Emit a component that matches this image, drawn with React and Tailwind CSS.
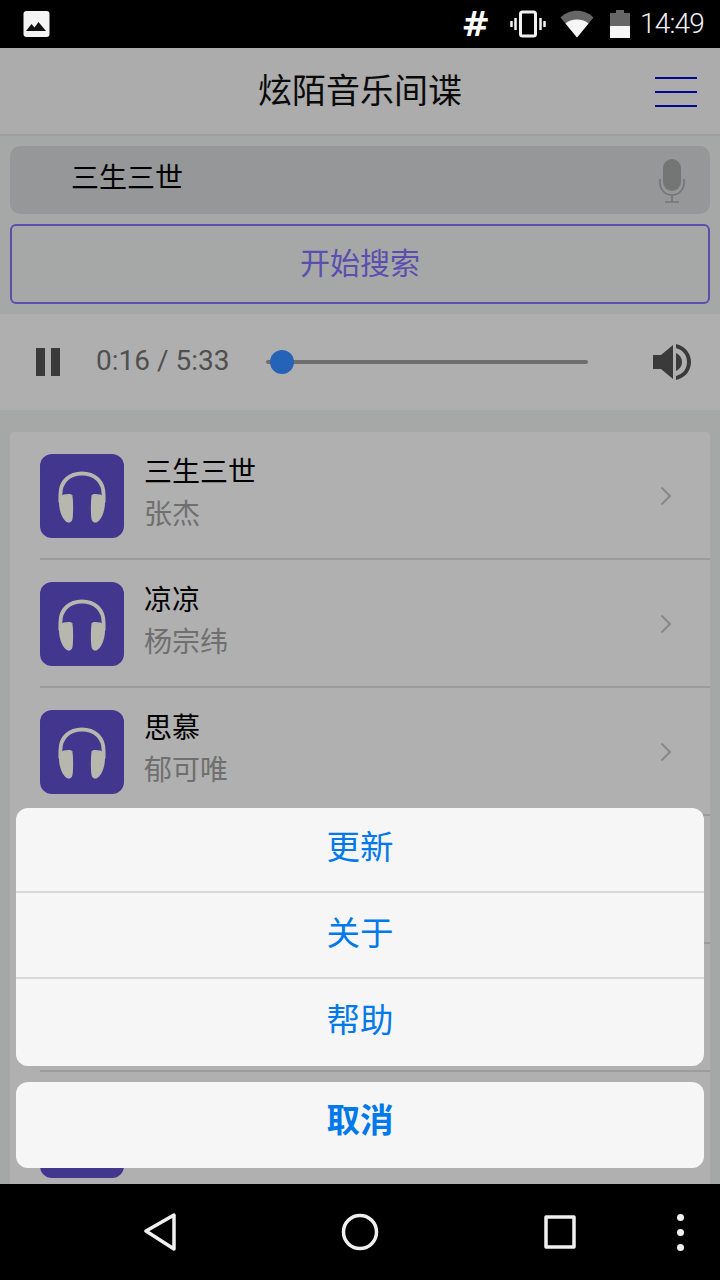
import React from 'react';

const cjk = "font-['Roboto','Noto_Sans_CJK_SC',sans-serif]";

const songs = [
  { title: '三生三世', artist: '张杰' },
  { title: '凉凉', artist: '杨宗纬' },
  { title: '思慕', artist: '郁可唯' },
  { title: '', artist: '' },
  { title: '', artist: '' },
  { title: '', artist: '' },
];

const StatusBar = () => (
  <div className="h-12 shrink-0 bg-black flex items-center pl-[23px] pr-4 text-[#f2f2f2]">
    <svg width="28" height="26" viewBox="0 0 28 26">
      <rect x="0.5" y="0" width="26" height="26" rx="3" fill="#f4f4f4" />
      <path d="M3 20 L8.5 13 L11.5 16.5 L15.5 11 L23 20 Z" fill="#111" />
    </svg>
    <div className="flex-1" />
    <span className="font-['DejaVu_Sans',sans-serif] font-bold text-[34px] leading-none text-white mr-[20px]">#</span>
    <svg className="mr-[14px]" width="36" height="28" viewBox="0 0 36 28" fill="none" stroke="#f2f2f2">
      <rect x="10.5" y="2" width="15" height="24" rx="2" strokeWidth="3" />
      <path d="M5.5 8v12M1.5 11v6M30.5 8v12M34.5 11v6" strokeWidth="2.5" />
    </svg>
    <svg className="mr-[16px]" width="34" height="28" viewBox="0 0 34 28">
      <path d="M0.5 7.5 C9 -1.5 25 -1.5 33.5 7.5 L17 27.5 Z" fill="#666" />
      <path d="M5.5 13.5 C11 8 23 8 28.5 13.5 L17 27.5 Z" fill="#f6f6f6" />
    </svg>
    <svg className="mr-[10px]" width="20" height="28" viewBox="0 0 20 28">
      <path d="M6 0h8v3h6v25H0V3h6z" fill="#666" />
      <rect x="0" y="16" width="20" height="12" fill="#f6f6f6" />
    </svg>
    <span className="font-['Roboto',sans-serif] font-light text-[28px] leading-none tracking-[-0.8px]">14:49</span>
  </div>
);

const Header = () => (
  <div className="h-[88px] shrink-0 bg-[#acacac] border-b-2 border-[#9ea0a0] flex items-center justify-center relative">
    <h1 className={`${cjk} text-[34px] font-normal leading-none text-[#0a0a0a]`}>炫陌音乐间谍</h1>
    <div className="absolute right-[23px] top-[29px] w-[42px] flex flex-col gap-[12px]">
      <div className="h-[2px] bg-[#000a90]" />
      <div className="h-[2px] bg-[#000a90]" />
      <div className="h-[2px] bg-[#000a90]" />
    </div>
  </div>
);

const SearchBox = () => (
  <div className="h-[68px] rounded-[10px] bg-[#959798] flex items-center pl-[61px] pr-[25px]">
    <span className={`${cjk} text-[28px] leading-none text-black flex-1 mb-[2px]`}>三生三世</span>
    <svg width="26" height="44" viewBox="0 0 26 44" fill="none" className="mt-[2px]">
      <rect x="4" y="0" width="18" height="32" rx="9" fill="#747676" />
      <path d="M1 20v4a12 12 0 0 0 24 0v-4M13 36v7M6 43h14" stroke="#747676" strokeWidth="1.6" />
    </svg>
  </div>
);

const Player = () => (
  <div className="h-24 shrink-0 mt-[10px] bg-[#afafaf] flex items-center pl-9 pr-[29px]">
    <div className="flex gap-[6px] mr-[36px]">
      <div className="w-[9px] h-[28px] bg-[#3a3a3a]" />
      <div className="w-[9px] h-[28px] bg-[#3a3a3a]" />
    </div>
    <span className="font-['Roboto',sans-serif] text-[28px] leading-none text-[#505050] w-[170px] mb-[2px]">0:16 / 5:33</span>
    <div className="w-[322px] h-[4px] bg-[#6e6e6e] rounded-full relative">
      <div className="absolute left-[4px] top-[-10px] w-[24px] h-[24px] rounded-full bg-[#2563b8]" />
    </div>
    <div className="flex-1" />
    <svg width="38" height="36" viewBox="0 0 38 36" fill="#3a3a3a">
      <path d="M0 11h8L20 1v34L8 25H0z" />
      <path d="M23 9c4 2 6 5 6 9s-2 7-6 9z" />
      <path d="M23 0c9 2 15 9 15 18s-6 16-15 18v-4c7-2 11-7 11-14S30 6 23 4z" />
    </svg>
  </div>
);

const Headphones = () => (
  <svg className="mt-[2px]" width="48" height="53" viewBox="0 0 50 54">
    <path d="M2.500 32V24C2.500 10 12 2 25 2S47.500 10 47.500 24v8" fill="none" stroke="#b7b7ae" strokeWidth="4" />
    <path d="M1 32c0-4 2-7 5-8 4-1 8-1 9 1 1 6 1 20 0 25-1 3-3 3.500-5 3-5-2-9-12-9-21z" fill="#b7b7ae" />
    <path d="M49 32c0-4-2-7-5-8-4-1-8-1-9 1-1 6-1 20 0 25 1 3 3 3.500 5 3 5-2 9-12 9-21z" fill="#b7b7ae" />
  </svg>
);

const SongRow = ({ title, artist }) => (
  <div className="h-32 shrink-0 flex flex-col pl-[30px]">
    <div className="h-[126px] pt-[2px] flex items-center">
      <div className="w-[84px] h-[84px] rounded-[12px] bg-[#42368f] flex items-center justify-center mr-[20px]">
        <Headphones />
      </div>
      <div className={`${cjk} flex-1 text-[28px] leading-[42px] mb-[5px]`}>
        <div className="text-black">{title}</div>
        <div className="text-[#6f6f6f]">{artist}</div>
      </div>
      {title && (
        <svg className="mr-[38px]" width="12" height="20" viewBox="0 0 12 20" fill="none" stroke="#868686" strokeWidth="2">
          <path d="M1.500 1.500 10 10l-8.500 8.500" />
        </svg>
      )}
    </div>
    <div className="h-[2px] bg-[#9c9c9c]" />
  </div>
);

const ActionSheet = () => (
  <div className={`${cjk} absolute left-4 right-4 top-[760px] flex flex-col gap-4 text-[33.5px] leading-none text-[#0279ea]`}>
    <div className="rounded-[12px] bg-[#f6f6f6] flex flex-col">
      <div className="h-[85px] pb-[4px] flex items-center justify-center border-b-2 border-[#d8d8d8]">更新</div>
      <div className="h-[86px] pb-[2px] flex items-center justify-center border-b-2 border-[#d8d8d8]">关于</div>
      <div className="h-[87px] pb-[4px] flex items-center justify-center">帮助</div>
    </div>
    <div className="h-[86px] pb-[8px] rounded-[12px] bg-[#f6f6f6] flex items-center justify-center font-bold">取消</div>
  </div>
);

const NavBar = () => (
  <div className="h-24 shrink-0 bg-black flex items-center relative">
    <svg className="ml-[143px]" width="34" height="38" viewBox="0 0 34 38" fill="none" stroke="#f0f0f0" strokeWidth="3.5" strokeLinejoin="round">
      <path d="M31 2v34L3 18z" />
    </svg>
    <svg className="ml-[164px]" width="38" height="38" viewBox="0 0 38 38" fill="none" stroke="#f0f0f0" strokeWidth="3.5">
      <circle cx="19" cy="19" r="16.500" />
    </svg>
    <svg className="ml-[165px]" width="32" height="34" viewBox="0 0 32 34" fill="none" stroke="#f0f0f0" strokeWidth="3.500" strokeLinejoin="round">
      <rect x="2" y="2" width="28" height="30" />
    </svg>
    <div className="ml-[101px] flex flex-col gap-[8px]">
      <div className="w-[7px] h-[7px] rounded-full bg-[#f0f0f0]" />
      <div className="w-[7px] h-[7px] rounded-full bg-[#f0f0f0]" />
      <div className="w-[7px] h-[7px] rounded-full bg-[#f0f0f0]" />
    </div>
  </div>
);

export default function App() {
  return (
    <div className="w-[720px] h-[1280px] flex flex-col overflow-hidden bg-black">
      <StatusBar />
      <div className="flex-1 relative overflow-hidden bg-[#a6a8a8] flex flex-col">
        <Header />
        <div className="shrink-0 px-[10px] pt-[10px] flex flex-col gap-[10px]">
          <SearchBox />
          <button className={`${cjk} h-[80px] rounded-[6px] border-2 border-[#5a4fae] text-[30px] leading-none text-[#5a4fae]`}>开始搜索</button>
        </div>
        <Player />
        <div className="mx-[10px] mt-[22px] bg-[#b0b0b0] rounded-t-[4px] flex flex-col shrink-0">
          {songs.map((s, i) => (
            <SongRow key={i} title={s.title} artist={s.artist} />
          ))}
        </div>
        <ActionSheet />
      </div>
      <NavBar />
    </div>
  );
}
